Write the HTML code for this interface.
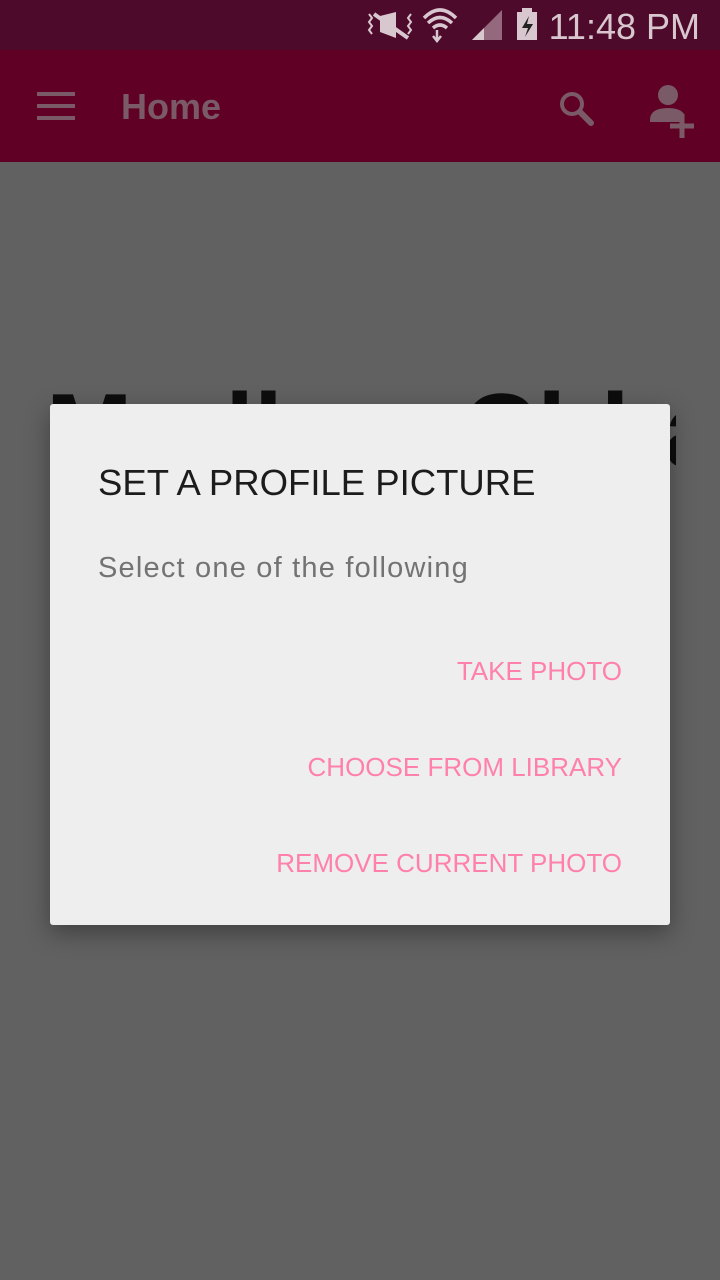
<!DOCTYPE html>
<html><head><meta charset="utf-8"><style>
*{margin:0;padding:0;box-sizing:border-box}
body{width:720px;height:1280px;background:#616161;font-family:"Liberation Sans",Roboto,sans-serif;position:relative;overflow:hidden}
.sb{position:absolute;top:0;left:0;width:720px;height:50px;background:#4e0a2b}
.tb{position:absolute;top:50px;left:0;width:720px;height:112px;background:#5f0024}
.time{position:absolute;right:20px;top:6px;font-size:36px;color:#d9c7cf}
.home{position:absolute;left:121px;top:36px;font-size:36px;font-weight:bold;color:#7a5a66}
.bgw{position:absolute;left:46px;top:372px;width:630px;height:110px;overflow:hidden}
.bg{font-size:104px;font-weight:bold;color:#0d0d0d;white-space:nowrap}
.dlg{position:absolute;left:50px;top:404px;width:620px;height:521px;background:#eeeeee;border-radius:3px;box-shadow:0 8px 24px rgba(0,0,0,.35)}
.t{position:absolute;left:48px;top:58px;font-size:36.5px;color:#1c1c1c}
.s{position:absolute;left:48px;top:148px;font-size:29px;letter-spacing:1.2px;color:#737373}
.b{position:absolute;right:48px;font-size:26px;color:#ff80ab}
</style></head><body>
<div class="sb">
<svg width="720" height="50" style="position:absolute;left:0;top:0">
<g fill="#d9c7cf" stroke="#d9c7cf">
<path d="M380 16 L396 12 L396 38 L380 32Z" stroke="none"/>
<path d="M374 14 L408 38" stroke-width="4"/>
<path d="M369 14l3 4-3 4 3 4-3 4 3 4M411 14l-3 4 3 4-3 4 3 4-3 4" fill="none" stroke-width="2"/>
<path d="M424 18 Q440 2 456 18 M428 23 Q440 12 452 23 M433 28 Q440 22 447 28" fill="none" stroke-width="3.5"/>
<path d="M437 30 v10 M433 36 l4 5 4-5" fill="none" stroke-width="2.5"/>
<path d="M472 40 L502 10 L502 40Z" opacity=".5" stroke="none"/>
<path d="M472 40 L484 28 L484 40Z" stroke="none"/>
<rect x="517" y="12" width="20" height="28" stroke="none"/><rect x="522" y="8" width="10" height="5" stroke="none"/>
<path d="M529 16 L522 28 L528 28 L525 37 L533 24 L527 24Z" fill="#222" stroke="none"/>
</g></svg>
<div class="time">11:48 PM</div>
</div>
<div class="tb">
<svg width="720" height="112" style="position:absolute;left:0;top:0">
<g fill="#7a5a66" stroke="#7a5a66">
<path d="M37 44h38M37 56h38M37 68h38" stroke-width="4"/>
<circle cx="572" cy="54" r="10" fill="none" stroke-width="4"/>
<path d="M580 62 L591 73" stroke-width="6" stroke-linecap="round"/>
<circle cx="668" cy="45" r="10" stroke="none"/>
<path d="M650 70 q0-12 18-12 q12 0 16 6 v8 h-34z" stroke="none"/>
<path d="M682 64v24M670 76h24" stroke-width="5"/>
</g></svg>
<div class="home">Home</div>
</div>
<div class="bgw"><div class="bg">Madhav Chhaja</div></div>
<div class="dlg">
<div class="t">SET A PROFILE PICTURE</div>
<div class="s">Select one of the following</div>
<div class="b" style="top:252px">TAKE PHOTO</div>
<div class="b" style="top:348px">CHOOSE FROM LIBRARY</div>
<div class="b" style="top:444px">REMOVE CURRENT PHOTO</div>
</div>
</body></html>
